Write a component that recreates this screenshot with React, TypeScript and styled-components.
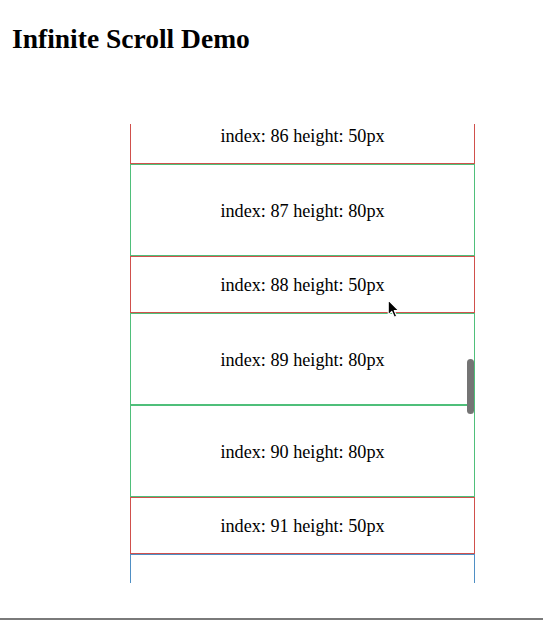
import React, { useLayoutEffect, useRef } from "react";
import styled, { createGlobalStyle } from "styled-components";

const GlobalStyle = createGlobalStyle`
  html, body {
    margin: 0;
    padding: 0;
    background: #fff;
  }
  body {
    font-family: "Liberation Serif", "Times New Roman", serif;
    color: #000;
  }
`;

// row height (in data units) -> border colour
const colors: Record<number, string> = {
  50: "#d0504c",
  80: "#4fbf7a",
  100: "#4f8fc4",
};

const items = [
  { index: 86, height: 50 },
  { index: 87, height: 80 },
  { index: 88, height: 50 },
  { index: 89, height: 80 },
  { index: 90, height: 80 },
  { index: 91, height: 50 },
  { index: 92, height: 100 },
];

// on-screen size of a row, borders included
const rowPx = (h: number) => Math.round(57 + ((h - 50) * 35) / 30);

const App = () => {
  const listRef = useRef<HTMLDivElement>(null);

  useLayoutEffect(() => {
    if (listRef.current) listRef.current.scrollTop = 17;
  }, []);

  return (
    <Page>
      <GlobalStyle />
      <Title>Infinite Scroll Demo</Title>
      <ListWrap>
        <List ref={listRef}>
          {items.map((item) => (
            <Row
              key={item.index}
              $color={colors[item.height]}
              style={{ height: rowPx(item.height) }}
            >
              index: {item.index} height: {item.height}px
            </Row>
          ))}
        </List>
        <Thumb />
        <Cursor width="13" height="20" viewBox="0 0 12 19">
          <path
            d="M1 1 L1 15 L4.4 11.8 L6.8 17.4 L9 16.4 L6.7 11 L11 11 Z"
            fill="#000"
            stroke="#fff"
            strokeWidth="1"
            strokeLinejoin="round"
          />
        </Cursor>
      </ListWrap>
    </Page>
  );
};

const Page = styled.div`
  box-sizing: border-box;
  height: 100vh;
  padding: 0 12px;
  border-bottom: 2px solid #7a7a7a;
  overflow: hidden;
`;

const Title = styled.h2`
  margin: 0;
  padding: 23px 0 0;
  font-size: 27.5px;
  font-weight: bold;
  line-height: 31px;
`;

const ListWrap = styled.div`
  position: relative;
  width: 345px;
  height: 459px;
  margin: 70px 0 0 118px;
`;

const List = styled.div`
  height: 100%;
  overflow: hidden;
`;

const Row = styled.div<{ $color: string }>`
  box-sizing: border-box;
  display: flex;
  flex-shrink: 0;
  align-items: center;
  justify-content: center;
  padding-top: 2px;
  border: 1px solid ${(p) => p.$color};
  font-size: 18.2px;
`;

const Thumb = styled.div`
  position: absolute;
  right: 1px;
  top: 235px;
  width: 7px;
  height: 55px;
  border-radius: 4px;
  background: #747474;
`;

const Cursor = styled.svg`
  position: absolute;
  left: 257px;
  top: 175px;
`;

export default App;
